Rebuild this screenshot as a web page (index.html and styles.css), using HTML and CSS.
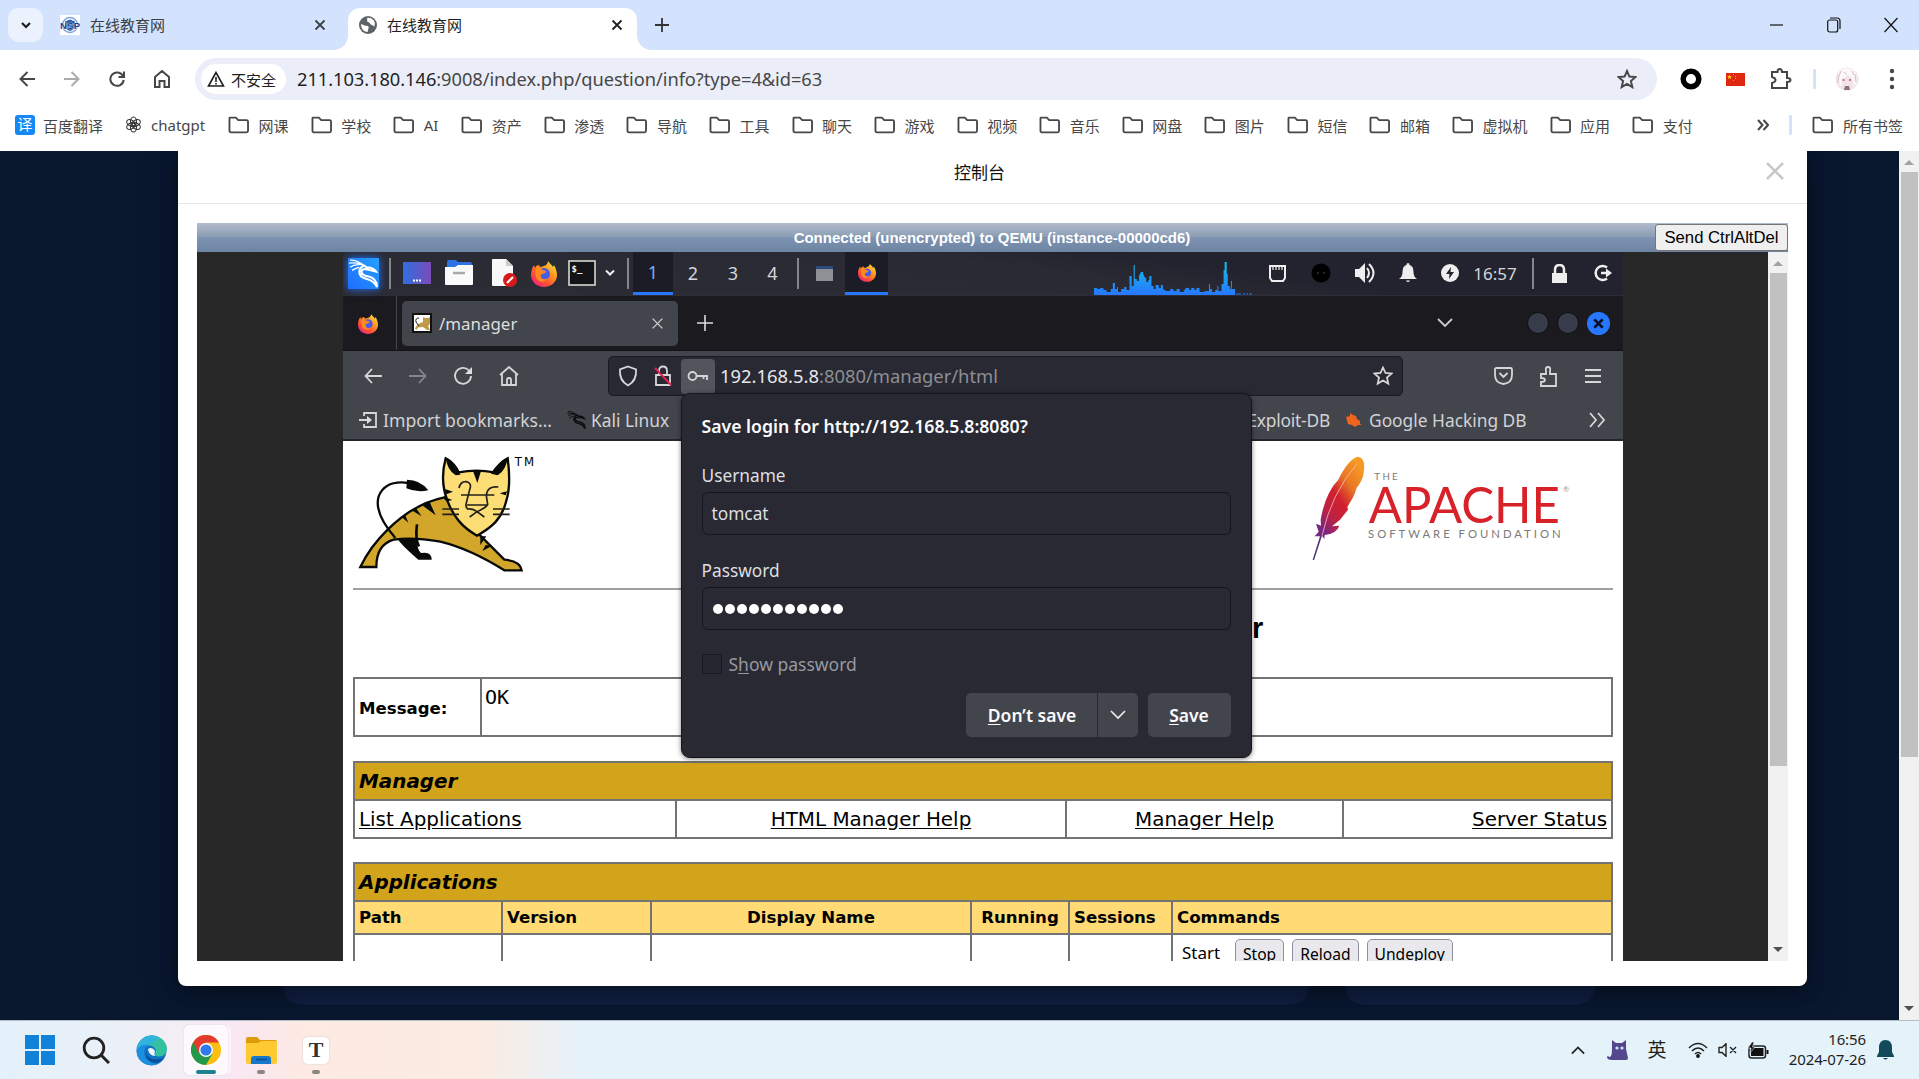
FILE: index.html
```html
<!DOCTYPE html>
<html lang="zh-CN">
<head>
<meta charset="utf-8">
<title>在线教育网</title>
<link rel="stylesheet" href="styles.css">
</head>
<body>
<svg width="0" height="0" class="defs">
  <defs>
    <linearGradient id="ffg" x1="1" y1="0" x2="0.2" y2="1"><stop offset="0" stop-color="#fff14a"/><stop offset=".4" stop-color="#ff9a1f"/><stop offset=".75" stop-color="#ff4a3a"/><stop offset="1" stop-color="#e8218a"/></linearGradient>
    <linearGradient id="desk" x1="0" x2="1"><stop offset="0" stop-color="#2f6fe0"/><stop offset="1" stop-color="#7a4bb8"/></linearGradient>
    <linearGradient id="feather" x1=".8" y1="0" x2=".1" y2="1"><stop offset="0" stop-color="#f79a23"/><stop offset=".22" stop-color="#e97826"/><stop offset=".4" stop-color="#d2202f"/><stop offset=".58" stop-color="#c0213f"/><stop offset=".75" stop-color="#7f2580"/><stop offset="1" stop-color="#3d3a7e"/></linearGradient>
    <linearGradient id="cpu" x1="0" y1="0" x2="0" y2="1"><stop offset="0" stop-color="#12c0e8"/><stop offset="1" stop-color="#2777ff"/></linearGradient>
  </defs>
  <symbol id="x" viewBox="0 0 12 12"><path d="M1.5 1.5l9 9M10.500 1.500l-9 9" fill="none" stroke="currentColor" stroke-width="1.8"/></symbol>
  <symbol id="folder" viewBox="0 0 22 18"><path d="M2 1.500h6l2.500 2.500H19q1.500 0 1.500 1.500v9.500q0 1.500-1.500 1.500H3q-1.500 0-1.500-1.500V2.500q0-1 .5-1z" fill="none" stroke="#474747" stroke-width="1.900"/></symbol>
  <symbol id="firefox" viewBox="0 0 26 27"><path d="M17 1c1 2 4 4 5 6l1-2c2 4 3 7 3 10 0 7-6 12-13 12S0 22 0 15c0-4 1-7 3-10l1 3c1-2 2-3 4-3 0 1 1 2 2 2 3-1 7-2 7-6z" fill="url(#ffg)"/><circle cx="13" cy="14" r="6" fill="#4a5be8"/><path d="M5 8c3-1 5 0 6 2 3 0 4 1 4 2-1 2-4 1-5 3-1 3 3 6 7 3-3 5-10 5-12-1-1-3-1-6 0-9z" fill="#ff8a1c"/></symbol>
  <symbol id="dragon" viewBox="0 0 30 30"><path d="M2 2q6 0 10 3M1 5q6-1 11 1M2 9q4-3 9-2.500M4 12q3-2 7-3" fill="none" stroke="currentColor" stroke-width="1.300"/><path d="M11 5q5 2 7 4 6 0 9 4l-6-1.500q-7-2-8 1.500 0 3.500 7 5 8 2 8 10-3-6-9-7.500-9-2-8-8 1-4 5-5" fill="none" stroke="currentColor" stroke-width="2"/></symbol>
</svg>

<header class="tabstrip">
  <button class="tabsearch"><svg width="12" height="8" viewBox="0 0 12 8"><path d="M2 2l4 4 4-4" fill="none" stroke="#1f1f1f" stroke-width="2.2"/></svg></button>
  <div class="tab">
    <svg width="20" height="20" viewBox="0 0 20 20"><path fill="#fff" d="M0 0h20v20H0z"/><circle cx="10" cy="10" r="7.500" fill="none" stroke="#7fa6d8" stroke-width="1.500"/><path d="M10 4.500l5 2v5q-1 3-5 4.500-4-1.500-5-4.500v-5z" fill="#2f5fb0"/><text x="0" y="13.500" textLength="20" class="nsp">NSP</text></svg>
    <span>在线教育网</span><svg class="tx" width="12" height="12"><use href="#x"/></svg>
  </div>
  <div class="tab active">
    <svg width="18" height="18" viewBox="0 0 18 18"><circle cx="9" cy="9" r="9" fill="#5f6368"/><path d="M2 8c3 1 4 2 7 2 2 2-1 4 0 6-4 0-7-3-7-8zM8 2c1 2-1 3 1 4 2 0 2 3 4 3 1 0 2 1 2 2 3-5-2-10-7-9z" fill="#fff"/></svg>
    <span>在线教育网</span><svg class="tx" width="12" height="12"><use href="#x"/></svg>
  </div>
  <svg class="plus" width="14" height="14" viewBox="0 0 14 14"><path d="M7 0v14M0 7h14" stroke="#333" stroke-width="1.800"/></svg>
  <div class="winctl">
    <svg width="14" height="14" viewBox="0 0 14 14"><path d="M0 7h13" stroke="#111" stroke-width="1.200"/></svg>
    <svg width="14" height="16" viewBox="0 0 14 16"><rect x=".7" y="3" width="10" height="12" rx="2" fill="none" stroke="#111" stroke-width="1.200"/><path d="M3 1h7q3 0 3 3v8" fill="none" stroke="#111" stroke-width="1.200"/></svg>
    <svg width="14" height="16" viewBox="0 0 14 16"><path d="M.5 1l13 14M13.500 1L.5 15" stroke="#111" stroke-width="1.200"/></svg>
  </div>
</header>

<nav class="toolbar">
  <svg width="16" height="16" viewBox="0 0 16 16"><path d="M8.500 1L1.500 8l7 7M2 8h14" class="ln"/></svg>
  <svg width="16" height="16" viewBox="0 0 16 16" class="dim"><path d="M7.500 1l7 7-7 7M0 8h14" class="ln"/></svg>
  <svg width="16" height="16" viewBox="0 0 16 16"><path d="M14 5A6.700 6.700 0 1 0 14.700 9M15 .5V6H9.500" class="ln"/></svg>
  <svg width="16" height="18" viewBox="0 0 16 18"><path d="M1 7l7-6 7 6v10h-4.500v-6h-5v6H1z" class="ln"/></svg>
  <div class="omni">
    <div class="chip"><svg width="18" height="16" viewBox="0 0 18 16"><path d="M9 1.500L1.500 15h15zM9 6v5M9 12v1.500" fill="none" stroke="#1f1f1f" stroke-width="1.600"/></svg><span>不安全</span></div>
    <span class="url"><b>211.103.180.146</b>:9008/index.php/question/info?type=4&amp;id=63</span>
    <svg class="star" width="20" height="20" viewBox="0 0 20 20"><path d="M10 2l2.400 5.600 6.100.500-4.600 4 1.400 6-5.300-3.200-5.300 3.200 1.400-6-4.600-4 6.100-.5z" class="ln"/></svg>
  </div>
  <svg width="22" height="22" viewBox="0 0 22 22"><circle cx="11" cy="11" r="7.800" fill="none" stroke="#000" stroke-width="5.500"/></svg>
  <svg width="19" height="13" viewBox="0 0 19 13"><path fill="#de2910" d="M0 0h19v13H0z"/><path d="M3.500 1.500l.7 1.700h1.700L4.600 4.300l.5 1.700-1.600-1-1.600 1 .5-1.700L1.100 3.200h1.700z" fill="#ffde00"/><path d="M7 1h1v1H7zM9 3h1v1H9zM9 5h1v1H9zM7 7h1v1H7z" fill="#f5a21b"/></svg>
  <svg width="22" height="22" viewBox="0 0 22 22"><path d="M2 4h5.500q0-3 2.200-3T12 4h5v6q3.500 0 3.500 2T17 14v6H2v-5q3.500-1 3.500-3T2 9z" class="ln"/></svg>
  <i class="bar"></i>
  <svg width="24" height="24" viewBox="0 0 24 24"><circle cx="12" cy="12" r="11.500" fill="#f1e4e8"/><path d="M3 5q9-8 18 0l1 10-3 5-2-9-4-3-5 4-2 8-3-5z" fill="#fbf6f7"/><path d="M7.500 13h2M14 13h2" stroke="#c2495c" stroke-width="1.600"/><path d="M10 19h4l1 4H9z" fill="#8b7480"/><path d="M4 8l-1 8M20 7l1 8M9 5l3 3M6 4l-2 5M17 4l2 4" stroke="#d6bfc7"/></svg>
  <svg width="6" height="22" viewBox="0 0 6 22"><g fill="#474747"><circle cx="3" cy="3" r="2.200"/><circle cx="3" cy="11" r="2.200"/><circle cx="3" cy="19" r="2.200"/></g></svg>
</nav>

<nav class="bookmarks">
  <a class="baidu"><i>译</i>百度翻译</a>
  <a class="gpt"><svg width="17" height="17" viewBox="0 0 17 17"><g fill="none" stroke="#333" stroke-width="1.100"><ellipse cx="8.500" cy="5.500" rx="3" ry="4.500"/><ellipse cx="8.500" cy="5.500" rx="3" ry="4.500" transform="rotate(60 8.500 8.500)"/><ellipse cx="8.500" cy="5.500" rx="3" ry="4.500" transform="rotate(120 8.500 8.500)"/><ellipse cx="8.500" cy="5.500" rx="3" ry="4.500" transform="rotate(180 8.500 8.500)"/><ellipse cx="8.500" cy="5.500" rx="3" ry="4.500" transform="rotate(240 8.500 8.500)"/><ellipse cx="8.500" cy="5.500" rx="3" ry="4.500" transform="rotate(300 8.500 8.500)"/></g></svg>chatgpt</a>
  <a><svg><use href="#folder"/></svg>网课</a><a><svg><use href="#folder"/></svg>学校</a><a class="ai"><svg><use href="#folder"/></svg>AI</a><a><svg><use href="#folder"/></svg>资产</a><a><svg><use href="#folder"/></svg>渗透</a><a><svg><use href="#folder"/></svg>导航</a><a><svg><use href="#folder"/></svg>工具</a><a><svg><use href="#folder"/></svg>聊天</a><a><svg><use href="#folder"/></svg>游戏</a><a><svg><use href="#folder"/></svg>视频</a><a><svg><use href="#folder"/></svg>音乐</a><a><svg><use href="#folder"/></svg>网盘</a><a><svg><use href="#folder"/></svg>图片</a><a><svg><use href="#folder"/></svg>短信</a><a><svg><use href="#folder"/></svg>邮箱</a><a><svg><use href="#folder"/></svg>虚拟机</a><a><svg><use href="#folder"/></svg>应用</a><a><svg><use href="#folder"/></svg>支付</a>
  <div class="more"><svg class="chev2" width="12" height="12" viewBox="0 0 12 12"><path d="M1 1l4.500 5L1 11M6.500 1L11 6l-4.500 5" class="ln"/></svg><i class="bar"></i><a><svg><use href="#folder"/></svg>所有书签</a></div>
</nav>

<main class="page">
  <div class="under"><i></i><i></i></div>
  <section class="modal">
    <div class="mhead">控制台<svg width="18" height="18" viewBox="0 0 18 18"><path d="M1 1l16 16M17 1L1 17" stroke="#c8c8c8" stroke-width="2.500"/></svg></div>
    <div class="console">
      <div class="status"><span>Connected (unencrypted) to QEMU (instance-00000cd6)</span><button>Send CtrlAltDel</button></div>
      <div class="view">
        <div class="vm">
          <div class="panel">
            <div class="kali"><svg width="31" height="31"><use href="#dragon"/></svg></div>
            <i class="sep"></i>
            <svg width="28" height="22" viewBox="0 0 28 22"><path fill="url(#desk)" d="M0 0h28v22H0z"/><path d="M10 18.500h8" stroke="#fff" stroke-width="2" stroke-dasharray="2 1"/></svg>
            <svg width="28" height="26" viewBox="0 0 28 26"><path d="M2 2q0-2 2-2h7l2 2h12q2 0 2 2v5H2z" fill="#2f72e6"/><path d="M0 7h10l3-2h15v19q0 1-1 1H1q-1 0-1-1z" fill="#fafafa"/><path d="M8 13h12" stroke="#aaa" stroke-width="2.500"/></svg>
            <svg width="26" height="28" viewBox="0 0 26 28"><path d="M1 1q0-1 1-1h13l7 7v20H2q-1 0-1-1z" fill="#f8f8f8"/><path d="M15 0v7h7z" fill="#ccc"/><circle cx="19" cy="21" r="7" fill="#d61a1a"/><path d="M16 24l6-6" stroke="#fff" stroke-width="2.200"/></svg>
            <svg width="26" height="27"><use href="#firefox"/></svg>
            <svg width="28" height="26" viewBox="0 0 28 26"><rect x="1" y="1" width="26" height="24" fill="#131417" stroke="#d8d8d0" stroke-width="1.600"/><text x="3.500" y="12" class="prompt">$_</text></svg>
            <svg width="12" height="8" viewBox="0 0 12 8"><path d="M2 1.500l4 4 4-4" fill="none" stroke="#eee" stroke-width="2"/></svg>
            <i class="sep late"></i>
            <span class="on">1</span><span>2</span><span>3</span><span>4</span>
            <i class="sep"></i>
            <svg width="17" height="15" viewBox="0 0 17 15"><path fill="#8f9096" d="M0 0h17v15H0z"/><path fill="#2c4a7c" d="M0 0h17v3H0z"/></svg>
            <span class="on"><svg width="18" height="19"><use href="#firefox"/></svg></span>
            <svg class="graph" width="158" height="34" viewBox="0 0 158 34"><path transform="scale(1.045 1)" fill="url(#cpu)" d="M0 34V27h3v1h3v-1h3v2h3v2h4v-3h2v-6h2v6h2v-2h1v5h3v-3h3v-2h2v3h3v-14h2v10h2V4h1v14h2v2h2v-5l2-4h2v2l2 4h1v4h2v-2h1v-4h2v10h2v3h2v-4h3v3h2v-3h2v4l3 2h4v-2h3v2h3v-2h3v3h4v-1l2-3h3v2h2v-2h3v2h2v-2h3v4h5v-1h4v-7h1v5h2v3h3v-2h2v-4h1v5h3v-7h2V9h1V1h2v12h1v12h2v3h1V20h1v8h3v6z"/><path d="M142 33h5M149 33h2M153 32v2M155 33h1M157 32v2" stroke="#2777ff"/></svg>
            <svg class="net" width="19" height="19" viewBox="0 0 19 19"><path d="M2 2h15v12l-2 3H4l-2-3z" fill="none" stroke="#eee" stroke-width="2"/><path d="M5 3v3M8 3v3M11 3v3M14 3v3" stroke="#eee" stroke-width="1.200"/></svg>
            <svg width="20" height="20" viewBox="0 0 20 20"><circle cx="10" cy="10" r="9.500" fill="#000"/><circle cx="7" cy="10" r="1" fill="#333"/><circle cx="13" cy="10" r="1" fill="#333"/></svg>
            <svg class="vol" width="22" height="20" viewBox="0 0 22 20"><path d="M0 6h4l6-6v20l-6-6H0z" fill="#eee"/><path d="M12 5q4 5 0 10M14 1q9 9 0 18" fill="none" stroke="#eee" stroke-width="2"/></svg>
            <svg width="18" height="20" viewBox="0 0 18 20"><path d="M9 0q1.500 0 1.500 2 4 1 4 7 0 5 3.500 7H0q3.500-2 3.500-7 0-6 4-7 0-2 1.500-2zM7 17.500h4q-2 3-4 0z" fill="#eee"/></svg>
            <svg width="18" height="18" viewBox="0 0 18 18"><circle cx="9" cy="9" r="9" fill="#eee"/><path d="M10 3l-5 7h3.500L8 15l5-7H9.500z" fill="#22232e"/></svg>
            <span class="time">16:57</span>
            <i class="sep"></i>
            <svg width="17" height="19" viewBox="0 0 17 19"><path d="M1 9h15v10H1z" fill="#eee"/><path d="M4 9V6q0-5 4.500-5T13 6v3" fill="none" stroke="#eee" stroke-width="2.500"/></svg>
            <svg class="exit" width="18" height="18" viewBox="0 0 18 18"><path d="M13 3.500a7 7 0 1 0 0 11M7 9h8" fill="none" stroke="#eee" stroke-width="2.500"/><path d="M12 4.500L18 9l-6 4.500z" fill="#eee"/></svg>
          </div>

          <div class="fftabs">
            <div class="pin"><svg width="20" height="21"><use href="#firefox"/></svg></div>
            <div class="fftab"><svg width="20" height="20" viewBox="0 0 20 20"><rect x="1" y="1" width="18" height="18" fill="#fff" stroke="#111" stroke-width="2"/><path d="M3 16q1-5 8-7V4l2 1h3l2-1v5q0 3-2 4l2 4h-3l-4-3-5 .5-1 2z" fill="#c09a48"/><path d="M7 5q-4 0-3 4l3 4" fill="none" stroke="#222"/></svg><span>/manager</span><svg class="tx" width="13" height="13" viewBox="0 0 12 12"><path d="M1.500 1.500l9 9M10.500 1.500l-9 9" stroke="#ccc" stroke-width="1.300"/></svg></div>
            <svg class="ffplus" width="16" height="16" viewBox="0 0 16 16"><path d="M8 0v16M0 8h16" stroke="#ddd" stroke-width="1.600"/></svg>
            <div class="ffctl"><svg width="16" height="10" viewBox="0 0 16 10"><path d="M1 1l7 7 7-7" fill="none" stroke="#ccc" stroke-width="1.800"/></svg><i></i><i></i><b><svg width="11" height="11" viewBox="0 0 12 12"><path d="M1.500 1.500l9 9M10.500 1.500l-9 9" stroke="#0a0f1c" stroke-width="3"/></svg></b></div>
          </div>

          <div class="ffbar">
            <svg width="18" height="16" viewBox="0 0 18 16"><path d="M8 1L1.500 8 8 15M2 8h16" class="lt"/></svg>
            <svg width="18" height="16" viewBox="0 0 18 16" class="dim"><path d="M10 1l6.500 7-6.500 7M0 8h16" class="lt"/></svg>
            <svg width="20" height="20" viewBox="0 0 20 20"><path d="M16 4.500A8 8 0 1 0 18 10" class="lt"/><path d="M19 1v7h-7z" fill="#ddd"/></svg>
            <svg width="20" height="20" viewBox="0 0 20 20"><path d="M1 9l9-8 9 8M3 8v11h14V8M8 19v-5q0-2 2-2t2 2v5" class="lt"/></svg>
            <div class="ffurl">
              <svg width="20" height="22" viewBox="0 0 20 22"><path d="M10 1.500l8 3q1 11-8 16-9-5-8-16z" class="lt"/></svg>
              <svg width="18" height="22" viewBox="0 0 18 22"><path d="M2 10h14v10H2zM5 10V6q0-4.500 4-4.500T13 6v4" class="lt"/><path d="M1 3l16 17" stroke="#e0214f" stroke-width="2"/></svg>
              <div class="key"><svg width="21" height="12" viewBox="0 0 21 12"><circle cx="5.500" cy="6" r="4" class="lt"/><path d="M9.500 6H20v4M16.500 6v3" class="lt"/></svg></div>
              <span><b>192.168.5.8</b>:8080/manager/html</span>
              <svg class="fstar" width="20" height="20" viewBox="0 0 20 20"><path d="M10 1.500l2.500 5.500 6 .6-4.500 4 1.300 6L10 14.500 4.700 17.600l1.300-6-4.500-4 6-.6z" class="lt"/></svg>
            </div>
            <svg class="pocket" width="19" height="18" viewBox="0 0 19 18"><path d="M1 2.500Q1 1 2.500 1h14Q18 1 18 2.500V8q0 8-8.500 9Q1 16 1 8zM5.500 6l4 4 4-4" class="lt"/></svg>
            <svg class="puz" width="18" height="21" viewBox="0 0 18 21"><path d="M2 8h5V5q-1-4 2-4t2 4v3h6v12H2v-4q4 0 4-2t-4-2z" class="lt"/></svg>
            <svg class="ham" width="16" height="14" viewBox="0 0 16 14"><path d="M0 1h16M0 7h16M0 13h16" class="lt"/></svg>
          </div>

          <div class="ffmarks">
            <svg width="18" height="16" viewBox="0 0 18 16"><path d="M5 4V1h12v14H5v-3M0 8h11" class="lt"/><path d="M8 4l5 4-5 4z" fill="#ddd"/></svg><span class="m1">Import bookmarks…</span>
            <svg class="drag" width="21" height="20"><use href="#dragon"/></svg><span class="m2">Kali Linux</span>
            <span class="m3">Exploit-DB</span>
            <svg width="18" height="16" viewBox="0 0 18 16"><path d="M1 5l4-1 0-3 3 2 3 1 1 3 3 2 0 3 2 1-4 0-3 2-3-2-4-1z" fill="#f0641e"/></svg><span class="m4">Google Hacking DB</span>
            <svg class="end" width="17" height="16" viewBox="0 0 17 16"><path d="M1 1l6 7-6 7M9 1l6 7-6 7" class="lt"/></svg>
          </div>

          <div class="web">
            <div class="logos">
              <svg class="cat" width="180" height="122" viewBox="50 70 540 366">
                <g fill="none" stroke="#080a08" stroke-width="7">
                  <path d="M60 412Q90 350 142 300 220 222 312 203L420 318 492 390Q540 394 544 422L492 422Q390 358 300 336 220 322 160 330 108 345 108 412Z" fill="#d1a62a"/>
                  <path d="M205 160Q135 150 115 200 100 250 165 325"/>
                  <path d="M316 86Q340 98 355 128 408 118 462 128 478 98 502 86C508 130 510 180 496 220C482 270 455 292 410 318C365 292 340 262 322 215C306 175 304 130 316 86Z" fill="#fddd76"/>
                  <path d="M230 284Q224 330 236 350" stroke-width="8"/>
                </g>
                <path d="M200 150Q240 150 264 182 230 190 198 176ZM316 84Q350 100 360 135L346 137Q320 120 316 84ZM502 84Q468 100 452 132L472 137Q498 120 502 84ZM398 124h24l-11 36zM245 226l22-11 19 42zM214 242l12-8 18 26zM184 262l10-7 10 24zM170 326l60 0q0 36 12 44 32-6 32 20h-40q-50-42-64-64zM314 178l24 8-20 8zM320 205l16 6-14 4zM500 185l-22 6 18 6zM420 320l18 0-18 26zM436 346l20 2-30 16z" fill="#080a08"/>
                <g fill="none" stroke="#222017" stroke-width="5"><path d="M356 175Q360 155 378 156 396 160 388 180L378 220Q374 230 382 238 398 236 410 246L432 262M474 172Q440 168 438 198L442 224Q438 234 410 246L388 262M362 196h100M380 226h60M306 238h50M306 254h50M458 238h50M458 254h50"/></g>
                <text x="523" y="108" textLength="58" class="tm">TM</text>
              </svg>
              <svg class="asf" width="260" height="108" viewBox="216 76 780 324">
                <path d="M354 81Q380 86 370 135 366 155 350 174L345 190 338 205 322 232 324 240 300 270 276 290 298 288Q290 312 254 316L253 328 246 318 222 392 218 390 240 320 224 320 236 306 228 282 243 288 242 270Q256 190 295 150 325 88 354 81Z" fill="url(#feather)"/>
                <path d="M350 104Q275 190 246 318" fill="none" stroke="#f5b9b0" stroke-width="2.500"/>
                <text x="403" y="152" textLength="70" class="sm">THE</text>
                <text x="386" y="281" textLength="574" lengthAdjust="spacingAndGlyphs" class="ap">APACHE</text>
                <text x="968" y="188" class="rg">®</text>
                <text x="384" y="326" textLength="578" class="sf">SOFTWARE FOUNDATION</text>
              </svg>
            </div>
            <div class="h1">Tomcat Web Application Manager</div>
            <table class="msg"><tr><td><b>Message:</b></td><td>OK</td></tr></table>
            <table class="mgr"><colgroup><col class="c1"><col class="c2"><col class="c3"><col class="c4"></colgroup>
              <tr><th colspan="4">Manager</th></tr>
              <tr><td><u>List Applications</u></td><td><u>HTML Manager Help</u></td><td><u>Manager Help</u></td><td><u>Server Status</u></td></tr></table>
            <table class="apps"><colgroup><col class="d1"><col class="d2"><col class="d3"><col class="d4"><col class="d5"><col class="d6"></colgroup>
              <tr><th colspan="6">Applications</th></tr>
              <tr class="cols"><td>Path</td><td>Version</td><td>Display Name</td><td>Running</td><td>Sessions</td><td>Commands</td></tr>
              <tr class="row"><td></td><td></td><td></td><td></td><td></td><td><div class="cmd"><span>Start</span><button>Stop</button><button>Reload</button><button>Undeploy</button></div></td></tr></table>
          </div>

          <div class="popup">
            <h2>Save login for http://192.168.5.8:8080?</h2>
            <label>Username</label><div class="field">tomcat</div>
            <label>Password</label><div class="field dots"><i></i><i></i><i></i><i></i><i></i><i></i><i></i><i></i><i></i><i></i><i></i></div>
            <div class="check"><i></i><span>S<u>h</u>ow password</span></div>
            <div class="btns"><button class="b1"><span><u>D</u>on’t save</span></button><button class="b2"><svg width="16" height="10" viewBox="0 0 16 10"><path d="M1 1l7 7 7-7" fill="none" stroke="#eee" stroke-width="1.600"/></svg></button><button class="b3"><span><u>S</u>ave</span></button></div>
          </div>
        </div>
        <div class="scroll"><i class="up"></i><i class="thumb"></i><i class="down"></i></div>
      </div>
    </div>
  </section>
  <div class="scroll outer"><i class="up"></i><i class="thumb"></i><i class="down"></i></div>
</main>

<footer class="taskbar">
  <svg width="30" height="30" viewBox="0 0 30 30"><path d="M0 0h14v14H0zM16 0h14v14H16zM0 16h14v14H0zM16 16h14v14H16z" fill="#1282d8"/></svg>
  <svg width="28" height="28" viewBox="0 0 28 28"><circle cx="12" cy="12" r="9.800" fill="none" stroke="#222" stroke-width="2.800"/><path d="M19 19l8 8" stroke="#222" stroke-width="3"/></svg>
  <svg width="31" height="31" viewBox="0 0 31 31"><circle cx="15.500" cy="15.500" r="15" fill="#1275c4"/><path d="M1 14C3 4 10 .5 16 .5c9 0 15 7 15 13 0 5-4 8-8 8-3 0-5-1-4-3 2-3 0-8-6-8C7 10 3 13 1 14z" fill="#35c1a0"/><path d="M1 14C3 4 10 .5 16 .5c2 0 5 1 7 2-3 4-8 6-10 8-6 0-10 3-12 3.500z" fill="#2fb4dd"/><path d="M1 14c3-4 8-5 12-4-5 2-6 7-4 12 2 4 7 7 13 7C12 33-1 26 1 14z" fill="#1b8fe0"/><path d="M11 15c-2 7 5 12 17 8-3 4-8 6-12 4-6-2-7-8-5-12z" fill="#0b4f9c"/><path d="M12 14q4-3 7 2-1 3 0 5-6 0-7-7z" fill="#eef8fc"/></svg>
  <div class="app cur"><svg width="30" height="30" viewBox="0 0 30 30"><circle cx="15" cy="15" r="15" fill="#fbbf12"/><path d="M15 15L2 7.500A15 15 0 0 0 15 30l6.500-11.300z" fill="#23984a"/><path d="M2 7.500A15 15 0 0 1 28 7.500H15L8.500 18.700z" fill="#e33b2e"/><circle cx="15" cy="15" r="7" fill="#fff"/><circle cx="15" cy="15" r="5.600" fill="#2f78ee"/></svg><i></i></div>
  <div class="app"><svg width="31" height="27" viewBox="0 0 31 27"><path d="M0 2q0-2 2-2h9l3 3h15q2 0 2 2v8H0z" fill="#dd9b0c"/><path d="M0 6h12l3-2h14q2 0 2 2v19q0 2-2 2H2q-2 0-2-2z" fill="#ffc931"/><path d="M5 27v-5q0-3 3-3h14q3 0 3 3v5z" fill="#1878cc"/><path d="M10 22.500h11" stroke="#0b4d8f" stroke-width="1.500"/></svg><i></i></div>
  <div class="app ty"><b>T</b><i></i></div>
  <div class="tray">
    <svg width="14" height="9" viewBox="0 0 16 10"><path d="M1 8.500l7-7 7 7" fill="none" stroke="#222" stroke-width="2"/></svg>
    <svg class="pet" width="21" height="20" viewBox="0 0 21 20"><path d="M5 0l4 3h6l4-3v9l2 9q0 2-2 2H5Q0 20 0 17q1-2 2 0 3 1 3-8z" fill="#54478c"/><circle cx="10" cy="8" r="1.600" fill="#cfe4ff"/><circle cx="15" cy="8" r="1.600" fill="#cfe4ff"/></svg>
    <span class="ime">英</span>
    <svg width="20" height="16" viewBox="0 0 20 16"><path d="M1 6q9-9 18 0M4 9q6-6 12 0M7 12q3-3 6 0" fill="none" stroke="#222" stroke-width="1.600"/><circle cx="10" cy="14" r="1.900" fill="#111"/></svg>
    <svg width="19" height="14" viewBox="0 0 19 14"><path d="M1 4.500h3l4-3.800v12.600L4 9.500H1zM12 4l6 6M18 4l-6 6" fill="none" stroke="#222" stroke-width="1.400"/></svg>
    <svg width="21" height="17" viewBox="0 0 21 17"><rect x="1" y="4" width="16.500" height="12" rx="2.500" fill="none" stroke="#222" stroke-width="1.500"/><path d="M3 6h12.500v8H3zM18.500 8h2v4h-2z" fill="#111"/><path d="M4 0L0 6h3L2 11l5-6H4.500L6 0z" fill="#111" stroke="#e6f3fa" stroke-width=".6"/></svg>
    <div class="clock">16:56<br>2024-07-26</div>
    <svg width="17" height="20" viewBox="0 0 17 20"><path d="M8.500 0Q15 0 15 8v4l2 4v1H0v-1l2-4V8Q2 0 8.500 0zM6 18h5q-2.500 3-5 0z" fill="#124a5c"/></svg>
  </div>
</footer>
</body>
</html>
```
FILE: styles.css
```css
* { box-sizing: border-box; }
body { margin: 0; width: 1919px; height: 1079px; overflow: hidden; font-family: "Noto Sans", "Noto Sans CJK SC", sans-serif; font-size: 15px; color: #1f1f1f; background: #fff; display: flex; flex-direction: column; }
svg { display: block; flex: none; }
.defs { position: absolute; }
button { font: inherit; border: 0; padding: 0; display: flex; align-items: center; justify-content: center; }
i, b { font-style: normal; }
.ln { fill: none; stroke: #474747; stroke-width: 2; }
.lt { fill: none; stroke: #d6d6d8; stroke-width: 1.8; }
.dim { opacity: .45; }

/* browser tab strip */
.tabstrip { height: 50px; flex: none; background: #d3e3fd; display: flex; align-items: center; padding-left: 8px; }
.tabsearch { width: 35px; height: 34px; border-radius: 11px; background: #ebf2fe; }
.tab { width: 271px; height: 42px; margin: 8px 0 0 17px; padding: 0 5px 8px 0; display: flex; align-items: center; gap: 10px; color: #3c4043; }
.tab span { margin-top: -2px; }
.tab .tx { margin-left: auto; }
.tab.active { position: relative; width: 289px; padding: 0 14px 8px 11px; background: #fff; border-radius: 12px 12px 0 0; color: #1f1f1f; }
.tab.active::before, .tab.active::after { content: ""; position: absolute; bottom: 0; width: 14px; height: 14px; }
.tab.active::before { left: -14px; background: radial-gradient(circle at 0 0, transparent 13.500px, #fff 14px); }
.tab.active::after { right: -14px; background: radial-gradient(circle at 100% 0, transparent 13.500px, #fff 14px); }
.nsp { font: 900 9.500px "Liberation Sans", sans-serif; fill: #123f8f; stroke: #fff; stroke-width: .6px; paint-order: stroke; }
.plus { margin-left: 18px; }
.winctl { margin-left: auto; width: 149px; display: flex; align-items: center; justify-content: space-between; padding-right: 21px; }

/* address row */
.toolbar { height: 51px; padding-top: 7px; flex: none; display: grid; grid-template-columns: 54px 36px 54px 36px 1492px 37px 52px 40px 26px 40px 50px; align-items: center; justify-items: center; }
.omni { width: 1462px; height: 42px; border-radius: 21px; background: #ebeef8; display: flex; align-items: center; padding: 0 20px 0 6px; }
.chip { width: 85px; height: 30px; border-radius: 15px; background: #fff; display: flex; align-items: center; gap: 6px; padding-left: 6px; margin-right: 11px; }
.url { font-size: 18.3px; color: #474747; letter-spacing: -.06px; margin-top: -2px; }
.url b { font-weight: 400; color: #1f1f1f; }
.star { margin-left: auto; }
.bar { width: 3px; height: 20px; background: #d3e3fd; border-radius: 1px; }
.bookmarks { height: 50px; flex: none; display: flex; align-items: center; padding: 0 16px 2px 15px; gap: 22.05px; color: #474747; white-space: nowrap; }
.bookmarks a { display: flex; align-items: center; gap: 9px; height: 24px; }
.bookmarks a > svg { width: 21.5px; height: 18px; margin-top: -1px; }
.bookmarks .gpt { width: 81px; gap: 9px; }
.bookmarks .gpt svg { width: 17px; height: 17px; }
.bookmarks .ai { width: 46px; }
.bookmarks .baidu { width: 88px; gap: 8px; }
.baidu i { width: 20px; height: 20px; border-radius: 3px; background: #1688f5; color: #fff; font-size: 15px; line-height: 19px; text-align: center; }
.more { margin-left: auto; display: flex; align-items: center; gap: 20px; }

/* page and dialog */
.page { height: 869px; flex: none; background: #09172f; display: flex; justify-content: flex-end; position: relative; overflow: hidden; }
.under { position: absolute; left: 283px; top: 754px; height: 100px; display: flex; gap: 36px; }
.under i { width: 1026px; background: #101e3f; border-radius: 20px; }
.under i + i { width: 251px; }
.modal { position: relative; width: 1629px; height: 835px; margin-right: 92px; background: #fff; border-radius: 0 0 8px 8px; box-shadow: 1px 1px 40px rgba(0,0,0,.25), 0 4px 16px rgba(0,0,0,.3); flex: none; }
.mhead { height: 53px; border-bottom: 1px solid #e6e6e6; display: flex; align-items: center; justify-content: center; font-size: 17px; color: #111; padding: 0 26px 12px 0; position: relative; }
.mhead svg { position: absolute; right: 23px; top: 11px; }
.console { width: 1591px; margin: 19px 0 0 19px; }
.status { height: 29px; background: linear-gradient(#b2bdcd 0, #899cb3 49%, #7e93b2 50%, #6e84a3 100%); display: flex; align-items: center; justify-content: flex-end; font: bold 15px "Liberation Sans", sans-serif; color: #fff; }
.status span { flex: 1; text-align: center; padding-left: 132px; }
.status button { width: 133px; height: 27px; border: 1.5px solid #767676; border-radius: 3px; background: #efefef; color: #000; font: 16.7px "Liberation Sans", sans-serif; white-space: nowrap; }
.view { height: 709px; background: #282828; display: flex; justify-content: space-between; padding-left: 146px; overflow: hidden; }
.scroll { width: 20px; height: 100%; background: #f1f1f1; display: flex; flex-direction: column; align-items: center; }
.scroll .thumb { width: 17px; height: 493px; background: #c1c1c1; margin-top: 7px; }
.scroll .up { border: 5px solid transparent; border-top: 0; border-bottom: 5px solid #a3a3a3; margin-top: 9px; }
.scroll .down { border: 5px solid transparent; border-bottom: 0; border-top: 5px solid #505050; margin: auto 0 9px; }
.scroll.outer { flex: none; }
.scroll.outer .thumb { height: 585px; }

/* remote desktop */
.vm { width: 1280px; height: 709px; position: relative; overflow: hidden; background: #fff; color: #ddd; }
.panel { height: 44px; background: #22232e linear-gradient(8deg, #2b2c34 0, #292a33 120px, #22232e 150px); border-bottom: 1px solid #2d2e36; display: grid; align-items: center; justify-items: center; grid-template-columns: 41px 12px 41px 44px 46px 34px 42px 14px 16px 40px 40px 40px 39px 12px 41px 43px 369px 42px 44px 44px 42px 42px 48px 28px 24px 52px; font-size: 18px; color: #d5d5da; grid-template-rows: 42px; }
.kali { width: 31px; height: 31px; background: linear-gradient(45deg, #1f6dff, #24a0ff); box-shadow: 0 0 8px #1f6dff; color: #fff; }
.sep { width: 2px; height: 31px; background: #85868c; }
.late { justify-self: end; margin-right: 4px; }
.on { align-self: stretch; justify-self: stretch; margin-bottom: -1px; background: #1b1c26; border-bottom: 3px solid #2777ff; color: #7ba9f5; display: flex; align-items: center; justify-content: center; }
.prompt { font: bold 9px "DejaVu Sans Mono", monospace; fill: #fff; }
.graph { justify-self: end; align-self: end; margin: 0 5px -1px 0; }
.net { margin-right: 2px; }
.vol { margin-left: 2px; }
.exit { margin-left: 11px; }
.time { font-size: 17px; }
.fftabs { height: 55px; background: #1a1a1f; border-bottom: 1px solid #111116; display: flex; align-items: center; font-size: 16.9px; }
.pin { width: 54px; height: 54px; border-right: 1px solid #45464e; display: flex; align-items: center; justify-content: center; padding-right: 3px; }
.fftab { width: 276px; height: 45px; margin-left: 5px; border-radius: 5px; background: #43454d; display: flex; align-items: center; gap: 7px; padding: 0 14px 0 10px; }
.fftab .tx { margin-left: auto; }
.ffplus { margin-left: 19px; }
.ffctl { margin-left: auto; display: flex; align-items: center; padding-right: 13px; gap: 8px; }
.ffctl > svg { margin-right: 66px; }
.ffctl i { width: 22px; height: 22px; border-radius: 50%; background: #383c4a; border: 1.5px solid #0e0f13; }
.ffctl b { width: 23px; height: 23px; border-radius: 50%; background: #2777ff; display: flex; align-items: center; justify-content: center; }
.ffbar { height: 49px; background: #43454d; display: flex; align-items: center; padding: 1px 0 0 21px; }
.ffbar > svg + svg { margin-left: 26px; }
.ffbar > svg:nth-child(2) { margin-left: 27px; }
.ffurl { width: 795px; height: 40px; margin-left: 89px; background: #282933; border: 1.5px solid #1a1b22; border-radius: 5px; display: flex; align-items: center; padding: 0 9px; gap: 16px; font-size: 18.4px; color: #8d8e94; }
.ffurl .key { width: 34px; height: 35px; border-radius: 4px; background: #53555d; display: flex; align-items: center; justify-content: center; margin: 0 -11px 0 -7px; padding-right: 1px; }
.ffurl b { font-weight: 400; color: #e8e8ea; }
.ffurl span { margin-top: -1px; }
.fstar { margin-left: auto; }
.ffbar > .pocket { margin-left: 91px; }
.ffbar > .ham { margin-left: 28px; }
.ffmarks { height: 41px; background: #43454d; border-bottom: 2px solid #25262c; display: flex; align-items: center; padding-left: 16px; font-size: 17.35px; color: #d2d2d4; white-space: nowrap; }
.m1 { width: 183px; margin-left: 6px; font-size: 17.6px; }
.m2 { width: 76px; margin-left: 4px; }
.m3 { width: 95px; margin-left: 568px; text-align: right; letter-spacing: -.2px; }
.ffmarks .m3 + svg { margin-left: 15px; }
.drag { color: #0d0d10; }
.m4 { margin-left: 6px; }
.end { margin-left: auto; margin-right: 17px; }

/* tomcat page */
.web { padding: 0 10px; font-family: "DejaVu Sans", sans-serif; color: #000; }
.logos { height: 149px; border-bottom: 2px solid #a0a0a0; display: flex; justify-content: space-between; padding: 12px 41px 0 4px; }
.asf { margin-top: 2px; }
.tm { font: 35px "DejaVu Sans", sans-serif; }
.ap { font: 400 151px Lato, sans-serif; fill: #d8222a; }
.sm { font: 400 29px Lato, sans-serif; fill: #7a7a7c; }
.sf { font: 400 34px Lato, sans-serif; fill: #7a7a7c; }
.rg { font: 24px Lato, sans-serif; fill: #999; }
.h1 { height: 87px; padding: 19px 350px 0 0; font: bold 29px/38px "Liberation Sans", sans-serif; text-align: right; letter-spacing: -.3px; }
table { width: 1260px; border-collapse: collapse; table-layout: fixed; margin-bottom: 24px; }
td, th { border: 2px solid #737373; padding: 0 4px; font-size: 19.9px; }
.msg { height: 60px; }
.msg td { vertical-align: top; padding: 7px 4px 0 3px; font: 20px/23px "DejaVu Sans Mono", monospace; }
.msg td:first-child { width: 127px; vertical-align: middle; padding: 3px 4px 0; font: bold 16.6px "DejaVu Sans", sans-serif; }
th { background: #d2a41c; text-align: left; font-style: italic; height: 38px; }
.mgr { margin-bottom: 23px; }
.mgr td { height: 38px; text-align: center; }
.mgr td:first-child { text-align: left; }
.mgr td:last-child { text-align: right; }
.c1 { width: 322px; } .c2 { width: 390px; } .c3 { width: 277px; }
.d1 { width: 148px; } .d2 { width: 149px; } .d3 { width: 320px; } .d4 { width: 98px; } .d5 { width: 103px; }
.cols td { height: 33px; background: #ffda75; font-size: 16.6px; font-weight: bold; }
.cols td:nth-child(3), .cols td:nth-child(4) { text-align: center; }
.row td { height: 60px; vertical-align: top; }
.cmd { display: flex; padding: 4px 0 0 5px; font: 15.6px/28px "Noto Sans", sans-serif; gap: 8px; }
.cmd span { width: 45px; font-size: 17px; }
.cmd button { height: 30px; border: 1.5px solid #8f8f9d; border-radius: 5px; background: #e9e9ed; padding: 0 7px; }

/* login doorhanger */
.popup { position: absolute; left: 337.5px; top: 141px; width: 571px; height: 365px; background: #282933; border: 1px solid #15161b; border-radius: 9px; padding: 20px; color: #dedee0; font-size: 17.3px; box-shadow: 0 1px 5px rgba(0,0,0,.5); }
.popup h2 { margin: 0 0 24px; font-size: 17.65px; line-height: 25px; font-weight: 600; color: #fbfbfe; }
.popup label { display: block; line-height: 25px; height: 29px; }
.field { height: 43px; border: 1.5px solid #15161a; border-radius: 6px; display: flex; align-items: center; padding: 0 10px 0 9px; margin-bottom: 23px; }
.dots { gap: 2px; margin-bottom: 24px; padding-left: 10px; }
.dots i { width: 10px; height: 10px; border-radius: 50%; background: #fff; }
.check { display: flex; align-items: center; gap: 7px; height: 20px; color: #98999f; font-size: 17.5px; }
.check i { width: 20px; height: 20px; border: 1.5px solid #17181d; border-radius: 3px; background: #25262f; }
u { text-underline-offset: 2px; }
.btns { display: flex; justify-content: flex-end; margin-top: 19px; }
.btns button { height: 44px; background: #43454d; color: #fbfbfe; font-weight: 600; font-size: 17.5px; }
.b1 { width: 131px; padding-left: 2px; border-radius: 5px 0 0 5px; }
.b2 { width: 40px; margin: 0 10px 0 1px; border-radius: 0 5px 5px 0; }
.b3 { width: 83px; border-radius: 5px; }

/* windows taskbar */
.taskbar { height: 59px; flex: none; border-top: 1px solid #b4bcc4; background: linear-gradient(90deg, #e4f1fa 0, #e9f0f8 110px, #f3eef4 180px, #f9e7f3 235px, #fdeae2 310px, #fbebe2 480px, #e6f2f9 580px, #e4f2fa 100%); display: grid; grid-template-columns: 70px 42px 68px 41px 70px 40px 1fr; align-items: center; justify-items: center; padding-left: 5px; }
.app { width: 44px; height: 50px; display: flex; flex-direction: column; align-items: center; justify-content: center; position: relative; }
.app > i { position: absolute; bottom: 1px; width: 8px; height: 4px; border-radius: 2px; background: #8b8583; }
.cur { background: rgba(255,255,255,.7); border-radius: 5px; box-shadow: 0 0 1px #aaa, 3px 0 1px rgba(255,255,255,.5); }
.cur > i { width: 20px; background: #1f8190; }
.ty b { width: 26px; height: 27px; border-radius: 5px; background: #fff; font: bold 22px/26px "Liberation Serif", serif; text-align: center; color: #333; box-shadow: 0 0 2px #ccc; }
.tray { justify-self: end; display: grid; grid-template-columns: 40px 42px 34px 48px 10px 52px 82px 38px; width: 361px; align-items: center; justify-items: center; }
.pet { margin-right: 3px; }
.ime { font-size: 19px; margin-top: -2px; }
.clock { font: 15px/20.500px "Noto Sans", sans-serif; text-align: right; letter-spacing: -.1px; justify-self: end; white-space: nowrap; padding-bottom: 2px; }
```
